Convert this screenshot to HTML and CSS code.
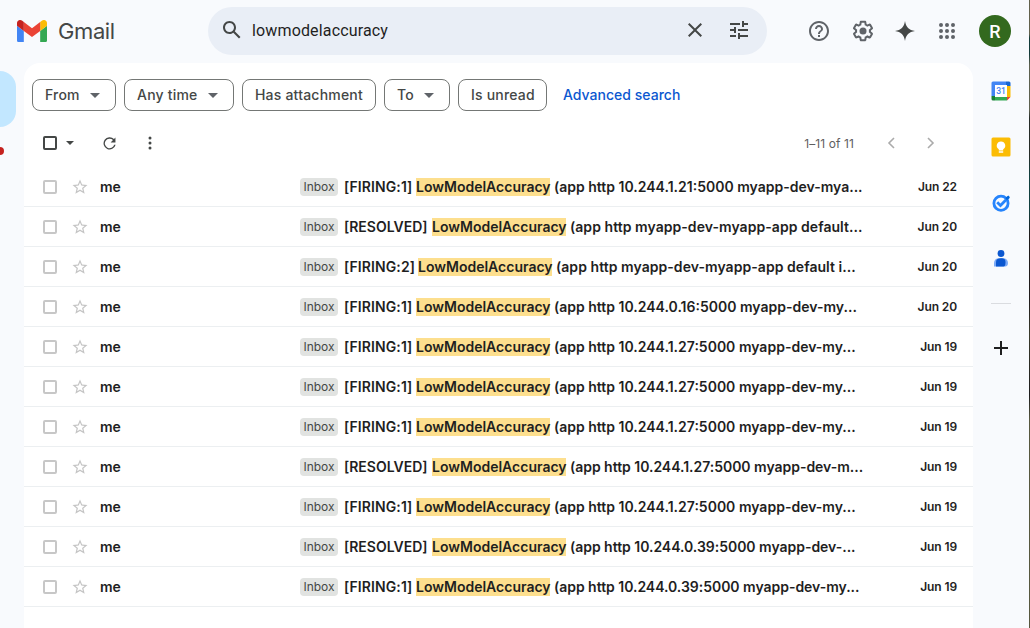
FILE: index.html
```html
<!DOCTYPE html>
<html lang="en">
<head>
<meta charset="utf-8">
<title>Gmail</title>
<link rel="stylesheet" href="styles.css">
</head>
<body>
<svg class="defs" aria-hidden="true">
  <symbol id="star" viewBox="0 0 24 24"><path d="M22 9.24l-7.19-.62L12 2 9.19 8.63 2 9.24l5.46 4.73L5.82 21 12 17.27 18.18 21l-1.63-7.03L22 9.24zM12 15.4l-3.76 2.27 1-4.28-3.32-2.88 4.38-.38L12 6.1l1.71 4.04 4.38.38-3.32 2.88 1 4.28L12 15.4z"/></symbol>
  <symbol id="caret" viewBox="0 0 10 5"><path d="M0 0h10L5 5z"/></symbol>
</svg>
<div class="app">
  <header class="topbar">
    <div class="brand">
      <svg class="logo" viewBox="52 42 88 66"><path fill="#4285f4" d="M58 108h14V74L52 59v43c0 3.32 2.69 6 6 6"/><path fill="#34a853" d="M120 108h14c3.32 0 6-2.69 6-6V59l-20 15"/><path fill="#fbbc04" d="M120 48v26l20-15v-8c0-7.42-8.47-11.65-14.4-7.2"/><path fill="#ea4335" d="M72 74V48l24 18 24-18v26L96 92"/><path fill="#c5221f" d="M52 51v8l20 15V48l-5.6-4.2c-5.94-4.45-14.4-.22-14.4 7.2"/></svg>
      <span class="brand-name">Gmail</span>
    </div>
    <div class="search">
      <svg class="i24" viewBox="0 0 24 24"><path d="M20.49 19l-5.73-5.73C15.53 12.2 16 10.91 16 9.5 16 5.91 13.09 3 9.5 3S3 5.91 3 9.5 5.91 16 9.5 16c1.41 0 2.7-.47 3.77-1.24L19 20.49 20.49 19zM5 9.5C5 7.01 7.01 5 9.5 5S14 7.01 14 9.5 11.99 14 9.5 14 5 11.99 5 9.5z"/></svg>
      <span class="query">lowmodelaccuracy</span>
      <svg class="i24 clear" viewBox="0 0 24 24"><path d="M19 6.41L17.59 5 12 10.59 6.41 5 5 6.41 10.59 12 5 17.59 6.41 19 12 13.41 17.59 19 19 17.59 13.41 12z"/></svg>
      <svg class="i24" viewBox="0 0 24 24"><path d="M3 17v2h6v-2H3zM3 5v2h10V5H3zm10 16v-2h8v-2h-8v-2h-2v6h2zM7 9v2H3v2h4v2h2V9H7zm14 4v-2H11v2h10zm-6-4h2V7h4V5h-4V3h-2v6z"/></svg>
    </div>
    <div class="tools">
      <svg class="i24" viewBox="0 0 24 24"><path d="M12 2C6.48 2 2 6.48 2 12s4.48 10 10 10 10-4.48 10-10S17.52 2 12 2zm0 18c-4.41 0-8-3.59-8-8s3.59-8 8-8 8 3.59 8 8-3.59 8-8 8zm-1-4h2v2h-2zm1-10c-2.21 0-4 1.79-4 4h2c0-1.1.9-2 2-2s2 .9 2 2c0 2-3 1.75-3 5h2c0-2.25 3-2.5 3-5 0-2.210-1.790-4-4-4z"/></svg>
      <svg class="i24" viewBox="0 0 24 24"><path d="M13.85 22.25h-3.7c-.74 0-1.360-.54-1.450-1.270l-.27-1.890c-.27-.14-.53-.29-.79-.46l-1.800.72c-.7.26-1.470-.03-1.810-.65L2.200 15.530c-.35-.66-.2-1.440.36-1.880l1.530-1.190c-.01-.15-.02-.3-.02-.46 0-.15.01-.31.02-.46l-1.520-1.190c-.59-.45-.74-1.260-.37-1.880l1.850-3.190c.34-.62 1.110-.9 1.790-.63l1.810.73c.26-.17.52-.32.78-.46l.27-1.910c.09-.7.71-1.250 1.440-1.250h3.700c.74 0 1.360.54 1.450 1.270l.27 1.890c.27.14.53.29.79.46l1.800-.72c.71-.26 1.480.03 1.820.65l1.840 3.180c.36.66.2 1.440-.36 1.880l-1.520 1.190c.01.15.02.3.02.46s-.01.31-.02.46l1.520 1.190c.56.45.72 1.230.37 1.860l-1.860 3.220c-.34.62-1.110.9-1.800.63l-1.800-.72c-.26.17-.52.32-.78.46l-.27 1.910c-.1.68-.72 1.220-1.460 1.220zm-3.230-2h2.760l.37-2.550.53-.22c.44-.18.88-.44 1.340-.78l.45-.34 2.380.96 1.380-2.400-2.030-1.580.07-.56c.03-.26.06-.51.06-.78s-.03-.53-.06-.78l-.07-.56 2.030-1.580-1.390-2.400-2.390.96-.45-.35c-.42-.32-.87-.58-1.330-.77l-.52-.22-.37-2.550h-2.760l-.37 2.550-.53.21c-.44.19-.88.44-1.340.79l-.45.33-2.380-.95-1.390 2.390 2.030 1.580-.07.56a7 7 0 0 0-.06.79c0 .26.02.53.06.78l.07.56-2.030 1.580 1.380 2.400 2.390-.96.45.35c.43.33.86.58 1.330.77l.53.22.38 2.550z"/><circle cx="12" cy="12" r="3.5"/></svg>
      <svg class="i24 spark" viewBox="0 0 24 24"><path d="M12 2C12.800 8 16 11.200 22 12 16 12.800 12.800 16 12 22 11.200 16 8 12.800 2 12 8 11.200 11.200 8 12 2z"/></svg>
      <svg class="i24" viewBox="0 0 24 24"><path d="M6 8a2 2 0 1 0 0-4 2 2 0 0 0 0 4zm6 0a2 2 0 1 0 0-4 2 2 0 0 0 0 4zm6 0a2 2 0 1 0 0-4 2 2 0 0 0 0 4zM6 14a2 2 0 1 0 0-4 2 2 0 0 0 0 4zm6 0a2 2 0 1 0 0-4 2 2 0 0 0 0 4zm6 0a2 2 0 1 0 0-4 2 2 0 0 0 0 4zM6 20a2 2 0 1 0 0-4 2 2 0 0 0 0 4zm6 0a2 2 0 1 0 0-4 2 2 0 0 0 0 4zm6 0a2 2 0 1 0 0-4 2 2 0 0 0 0 4z"/></svg>
      <span class="avatar">R</span>
    </div>
  </header>
  <div class="body">
    <nav class="leftnav"><span class="nav-active"></span><span class="nav-dot"></span></nav>
    <main class="card">
      <div class="chips">
        <span class="chip from"><span>From</span><svg><use href="#caret"/></svg></span>
        <span class="chip time"><span>Any time</span><svg><use href="#caret"/></svg></span>
        <span class="chip attach"><span>Has attachment</span></span>
        <span class="chip to"><span>To</span><svg><use href="#caret"/></svg></span>
        <span class="chip unread"><span>Is unread</span></span>
        <a class="advanced">Advanced search</a>
      </div>
      <div class="toolbar">
        <span class="box dark"></span>
        <svg class="small-caret"><use href="#caret" width="8" height="4"/></svg>
        <svg class="refresh" viewBox="0 0 20 20"><path d="M15.300 4.700A7.200 7.200 0 1 0 17.200 11.500h-1.700a5.600 5.600 0 1 1-1.400-5.500L11.300 8.800H17V3z"/></svg>
        <svg class="more" viewBox="0 0 4 14"><circle cx="2" cy="2" r="1.500"/><circle cx="2" cy="7" r="1.500"/><circle cx="2" cy="12" r="1.500"/></svg>
        <span class="count">1–11 of 11</span>
        <svg class="arrow prev" viewBox="0 0 8 12"><path d="M7 1L2 6l5 5"/></svg>
        <svg class="arrow" viewBox="0 0 8 12"><path d="M1 1l5 5-5 5"/></svg>
      </div>
      <div class="rows">
        <div class="row"><span class="box"></span><svg class="star"><use href="#star"/></svg><span class="sender">me</span><span class="label">Inbox</span><span class="subject"><span class="f">[FIRING:1]</span> <mark>LowModelAccuracy</mark> <span class="rest">(app http 10.244.1.21:5000 myapp-dev-mya...</span></span><span class="date">Jun 22</span></div>
        <div class="row"><span class="box"></span><svg class="star"><use href="#star"/></svg><span class="sender">me</span><span class="label">Inbox</span><span class="subject"><span class="r">[RESOLVED]</span> <mark>LowModelAccuracy</mark> <span class="rest wide">(app http myapp-dev-myapp-app default...</span></span><span class="date">Jun 20</span></div>
        <div class="row"><span class="box"></span><svg class="star"><use href="#star"/></svg><span class="sender">me</span><span class="label">Inbox</span><span class="subject"><span class="f2">[FIRING:2]</span> <mark>LowModelAccuracy</mark> <span class="rest wide">(app http myapp-dev-myapp-app default i...</span></span><span class="date">Jun 20</span></div>
        <div class="row"><span class="box"></span><svg class="star"><use href="#star"/></svg><span class="sender">me</span><span class="label">Inbox</span><span class="subject"><span class="f">[FIRING:1]</span> <mark>LowModelAccuracy</mark> <span class="rest">(app http 10.244.0.16:5000 myapp-dev-my...</span></span><span class="date">Jun 20</span></div>
        <div class="row"><span class="box"></span><svg class="star"><use href="#star"/></svg><span class="sender">me</span><span class="label">Inbox</span><span class="subject"><span class="f">[FIRING:1]</span> <mark>LowModelAccuracy</mark> <span class="rest">(app http 10.244.1.27:5000 myapp-dev-my...</span></span><span class="date">Jun 19</span></div>
        <div class="row"><span class="box"></span><svg class="star"><use href="#star"/></svg><span class="sender">me</span><span class="label">Inbox</span><span class="subject"><span class="f">[FIRING:1]</span> <mark>LowModelAccuracy</mark> <span class="rest">(app http 10.244.1.27:5000 myapp-dev-my...</span></span><span class="date">Jun 19</span></div>
        <div class="row"><span class="box"></span><svg class="star"><use href="#star"/></svg><span class="sender">me</span><span class="label">Inbox</span><span class="subject"><span class="f">[FIRING:1]</span> <mark>LowModelAccuracy</mark> <span class="rest">(app http 10.244.1.27:5000 myapp-dev-my...</span></span><span class="date">Jun 19</span></div>
        <div class="row"><span class="box"></span><svg class="star"><use href="#star"/></svg><span class="sender">me</span><span class="label">Inbox</span><span class="subject"><span class="r">[RESOLVED]</span> <mark>LowModelAccuracy</mark> <span class="rest tight">(app http 10.244.1.27:5000 myapp-dev-m...</span></span><span class="date">Jun 19</span></div>
        <div class="row"><span class="box"></span><svg class="star"><use href="#star"/></svg><span class="sender">me</span><span class="label">Inbox</span><span class="subject"><span class="f">[FIRING:1]</span> <mark>LowModelAccuracy</mark> <span class="rest">(app http 10.244.1.27:5000 myapp-dev-my...</span></span><span class="date">Jun 19</span></div>
        <div class="row"><span class="box"></span><svg class="star"><use href="#star"/></svg><span class="sender">me</span><span class="label">Inbox</span><span class="subject"><span class="r">[RESOLVED]</span> <mark>LowModelAccuracy</mark> <span class="rest tight">(app http 10.244.0.39:5000 myapp-dev-...</span></span><span class="date">Jun 19</span></div>
        <div class="row"><span class="box"></span><svg class="star"><use href="#star"/></svg><span class="sender">me</span><span class="label">Inbox</span><span class="subject"><span class="f">[FIRING:1]</span> <mark>LowModelAccuracy</mark> <span class="rest tight">(app http 10.244.0.39:5000 myapp-dev-my...</span></span><span class="date">Jun 19</span></div>
      </div>
    </main>
    <aside class="side">
      <svg class="i20" viewBox="0 0 20 20"><path fill="#4285f4" d="M2 .5h13V5H5v10H.5V2A1.500 1.500 0 0 1 2 .5z"/><path fill="#1967d2" d="M15 .5h3A1.500 1.500 0 0 1 19.500 2v3H15z"/><path fill="#fbbc04" d="M16 5h3.500v11H16z"/><path fill="#34a853" d="M4 16h12v3.500H4z"/><path fill="#188038" d="M.5 15H4v4.500H2A1.500 1.500 0 0 1 .5 18z"/><path fill="#ea4335" d="M16 16h3.500L16 19.500z"/><path fill="#fff" d="M4 4h12v12H4z"/><text x="10" y="13.200" text-anchor="middle" class="cal">31</text></svg>
      <svg class="i20" viewBox="0 0 20 20"><rect x=".5" y=".5" width="19" height="19" rx="1.500" fill="#fbbc04"/><path fill="#fff" d="M10 4.500a4.200 4.200 0 0 0-2.200 7.800V13.500h4.400v-1.200A4.200 4.200 0 0 0 10 4.500zM7.800 14.300h4.400v1.500H7.800z"/></svg>
      <svg class="i20" viewBox="0 0 20 20"><circle cx="10" cy="10.300" r="7.100" fill="none" stroke="#2684fc" stroke-width="2.800"/><path d="M6.200 9.200l3.300 3.300 8-8.300" fill="none" stroke="#2684fc" stroke-width="2.800"/><path d="M14.300 5.100l3-2.700 1.700 1.800-3 3z" fill="#0066da"/></svg>
      <svg class="i20" viewBox="0 0 20 20"><circle cx="10" cy="4.500" r="3.400" fill="#0b57d0"/><path d="M3 17.500v-3.500C3 11 5 9.200 8 9.200h4c3 0 5 1.500 5 4.800 0 2-.8 3.500-3 3.500z" fill="#7baaf7"/><path d="M5 17.500v-4c0-3 1.500-4.300 5-4.300s4.500 1.300 4.500 4.300c0 2.500-.7 4-2 4z" fill="#0b57d0"/></svg>
      <span class="divider"></span>
      <svg class="i20 plus" viewBox="0 0 20 20"><path d="M9 3h2v6h6v2h-6v6H9v-6H3V9h6z"/></svg>
    </aside>
  </div>
</div>
<span class="edge"></span>
</body>
</html>
```
FILE: styles.css
```css
* { box-sizing: border-box; }
body { margin: 0; width: 1030px; height: 628px; overflow: hidden; background: #f8fafd; font-family: Inter, sans-serif; color: #1f1f1f; }
.defs { position: absolute; width: 0; height: 0; }
svg { display: block; flex: none; }
.app { height: 628px; display: flex; flex-direction: column; }
.topbar { height: 63px; display: flex; flex: none; }
.brand { width: 208px; height: 62px; padding-left: 17px; display: flex; align-items: center; gap: 11px; flex: none; }
.logo { width: 30px; height: 22.5px; }
.brand-name { font-size: 22px; letter-spacing: -.4px; color: #444746; }
.search { width: 559px; height: 48px; margin-top: 7px; border-radius: 24px; background: #e9eef6; display: flex; align-items: center; padding: 0 16px 2px 12px; fill: #444746; flex: none; }
.i24 { width: 24px; height: 24px; }
.query { margin-left: 8px; flex: 1; font-size: 16px; font-family: Roboto, sans-serif; letter-spacing: .15px; }
.clear { margin-right: 20px; }
.tools { display: flex; align-items: center; height: 62px; padding-left: 40px; fill: #5f6368; gap: 20px; }
.tools .i24:nth-child(3) { margin-left: -2px; }
.tools .i24:nth-child(4) { margin-left: -2px; }
.tools .spark { fill: #444746; }
.avatar { width: 32px; height: 32px; border-radius: 50%; background: #33691e; color: #fff; font: 500 18px/34px Roboto, sans-serif; text-align: center; }
.body { flex: 1; display: flex; min-height: 0; }
.leftnav { width: 24px; padding-top: 8px; flex: none; overflow: hidden; }
.nav-active { display: block; width: 16px; height: 56px; background: #c2e7ff; border-radius: 0 16px 16px 0; }
.nav-dot { display: block; width: 8px; height: 8px; border-radius: 50%; background: #c5221f; margin: 20px 0 0 -4px; }
.card { width: 949px; background: #fff; border-radius: 16px 16px 0 0; flex: none; }
.chips { display: flex; gap: 8px; padding: 16px 8px 0; height: 64px; }
.chip { height: 32px; border: 1px solid #747775; border-radius: 8px; padding-left: 12px; display: flex; align-items: center; font-size: 14px; font-weight: 450; line-height: 30px; color: #444746; letter-spacing: .2px; white-space: nowrap; }
.chip svg { width: 10px; height: 5px; fill: #5f6368; margin-left: auto; margin-right: 15px; }
.from { width: 84px; }
.time { width: 110px; }
.attach { width: 134px; }
.to { width: 66px; }
.unread { width: 89px; }
.advanced { color: #0b57d0; font-size: 14px; font-weight: 450; line-height: 32px; letter-spacing: .02px; margin-left: 8px; }
.toolbar { height: 40px; display: flex; align-items: center; padding: 0 38px 8px 19px; fill: #444746; }
.box { width: 14px; height: 14px; border: 2px solid #c7c7c7; border-radius: 2px; flex: none; }
.box.dark { border-color: #444746; }
.small-caret { width: 8px; height: 4px; margin-left: 9px; }
.refresh { width: 17px; height: 17px; margin-left: 27px; }
.more { width: 4px; height: 14px; margin-left: 30px; }
.count { margin-left: auto; font-size: 12px; color: #5e5e5e; letter-spacing: .1px; }
.arrow { width: 8px; height: 12px; fill: none; stroke: #ababab; stroke-width: 1.6; }
.prev { margin: 0 32px 0 33px; }
.row { height: 40px; border-bottom: 1px solid #eceff1; display: flex; align-items: center; padding: 0 16px 0 19px; }
.star { width: 18px; height: 18px; margin: 1px 0 0 14px; fill: #c4c4c4; }
.sender { width: 200px; margin-left: 11px; font-size: 14px; font-weight: 600; }
.label { width: 38px; height: 18px; border-radius: 4px; background: #e1e3e1; color: #444746; font-size: 12px; line-height: 18px; text-align: center; flex: none; }
.subject { margin-left: 6px; font-size: 14px; font-weight: 600; white-space: nowrap; display: flex; }
.f, .f2, .r { flex: none; letter-spacing: .1px; }
.f { width: 72px; }
.f2 { width: 74px; }
.r { width: 88px; letter-spacing: 0; }
mark { width: 134px; height: 18px; line-height: 18px; background: #fddf8e; color: inherit; margin-right: 4px; }
.wide { letter-spacing: .05px; }
.tight { letter-spacing: -.03px; }
.date { margin-left: auto; font-size: 12px; font-weight: 600; letter-spacing: -.1px; white-space: nowrap; }
.side { width: 56px; display: flex; flex-direction: column; align-items: center; padding-top: 18px; gap: 36px; }
.i20 { width: 20px; height: 20px; }
.cal { font: 500 8.500px Roboto, sans-serif; fill: #4285f4; }
.divider { width: 20px; height: 1px; background: #dadce0; margin-top: -2px; }
.plus { fill: #1f1f1f; margin-top: -2px; }
.edge { position: absolute; right: 0; top: 0; width: 1px; height: 628px; background: linear-gradient(#62614c 0 34px, #123a38 38px 54px, #5d604f 65px 110px, #262c28 118px 155px, #12403f 175px 210px, #201c1c 235px 300px, #3a3b2c 335px, #1c1c1c 395px, #57583f 420px); }
```
